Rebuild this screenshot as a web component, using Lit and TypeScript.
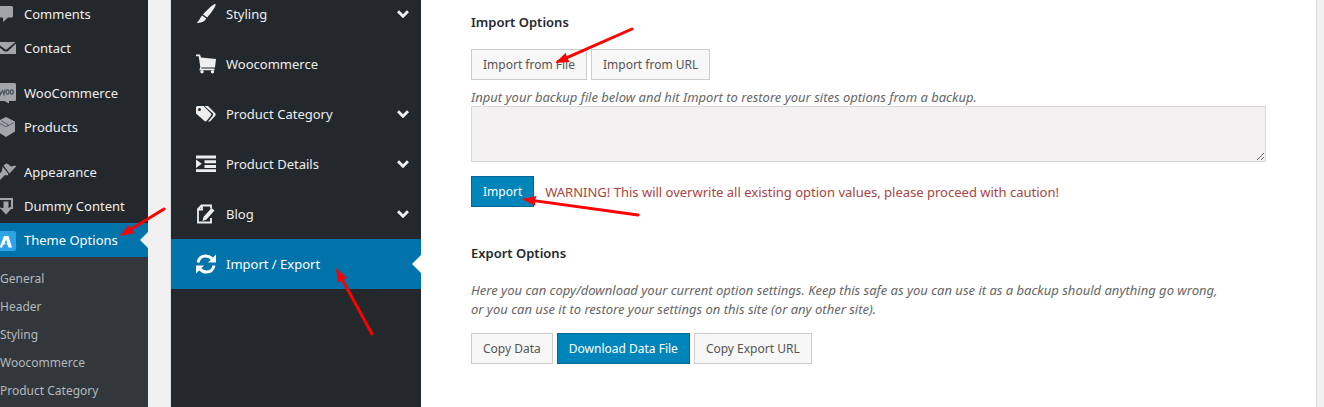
import { LitElement, html, svg, css } from "lit";
import { customElement } from "lit/decorators.js";
import { classMap } from "lit/directives/class-map.js";

const adminIcons: Record<string, unknown> = {
  comments: svg`<path fill="#a0a5aa" d="M5 2h11.500a1.500 1.500 0 0 1 1.500 1.500v8.500a1.500 1.500 0 0 1-1.500 1.500H13l-5 4.500v-4.500H5z"/>`,
  contact: svg`<path fill="#a0a5aa" d="M0 4h20.500l-9 7.500h-1zM0 5.500l9.500 8h3L21 5.500V16H0z"/>`,
  woo: svg`<path fill="#a0a5aa" d="M1 0h18.500a1.500 1.500 0 0 1 1.500 1.500v15a1.500 1.500 0 0 1-1.500 1.500H14v2.500L9.500 18H1z"/><path fill="none" stroke="#4c5358" stroke-width="1.200" d="M4 6.500l1.500 5 2-4 1.500 4 1-5"/><ellipse cx="12.500" cy="9" rx="1.500" ry="2.200" fill="none" stroke="#4c5358" stroke-width="1.200"/><ellipse cx="16.800" cy="9" rx="1.500" ry="2.200" fill="none" stroke="#4c5358" stroke-width="1.200"/>`,
  products: svg`<path fill="#a0a5aa" d="M11 0l9 4.500v10L11 20l-9-5.500v-10z"/><path fill="none" stroke="#4c5358" stroke-width=".8" d="M3 5.500l8 4.300 8-4.300M6 3.800l7 3.700v2"/>`,
  appearance: svg`<path fill="#a0a5aa" d="M8.500 3.500l2.500-2 2 .500 3 2.500L20.500 3.500 21 4.500l-6.500 7zM7.500 4.500l6 7.500-1 1.500-2.500-.5-6 6H1l-.500-1 4-4-1-1 3.500-4z"/>`,
  dummy: svg`<path fill="none" stroke="#a0a5aa" stroke-width="2" d="M5.500 12H3V3h14v9H14.500"/><path fill="#a0a5aa" d="M8.500 5.500h5V12H17l-6 6.500L5 12h3.500z"/>`,
  theme: svg`<rect y="1" width="21" height="20" rx="2" fill="#2ea3e5"/><path fill="#fff" d="M9 6h4.500L17 17.500h-3.500l-.8-2.500c-1-1.500-3.200-1.500-4.500 0L7 17.500H4.500zM11 9.500l-1.500 4h3z"/>`,
};

const optionIcons: Record<string, unknown> = {
  brush: svg`<path d="M19.500.2c1 .8-3.500 8.300-8.300 13.300L7 10.500C12 5 18.200-.8 19.500.200zM6.200 11.500l4 3C8.500 17.800 5 19.300.500 18.800 3 17.500 4 13.500 6.200 11.500z"/>`,
  cart: svg`<path d="M0 .5h4l1 3 15 1.500-1 8.500H5.500l-.3 1H18.500v1.700H3.300l1-3L2.700 2.200H0z"/><circle cx="6" cy="17.700" r="1.700"/><circle cx="16.500" cy="17.700" r="1.700"/>`,
  tags: svg`<path fill-rule="evenodd" d="M0 3.500A1.500 1.500 0 0 1 1.500 2H7.500l7.500 7.500a1.500 1.500 0 0 1 0 2L10.500 17a1.500 1.500 0 0 1-2 0L0 9.500zM3.500 4a1.500 1.500 0 1 0 0 3 1.500 1.500 0 0 0 0-3z"/><path d="M8.500 2H12l7.500 7.500v2L14 17.500h-2l5-6v-2z"/>`,
  indent: svg`<path d="M0 1.500h20v3H0zM8.500 6.300h11.500v3H8.500zM8.500 11h11.500v3H8.500zM0 15.200h20V18H0zM0 5.500L5.800 9.800 0 14z"/>`,
  edit: svg`<path fill="none" stroke="#eee" stroke-width="1.800" d="M15 4.500V1.500H5.500L2 5v13.500h13V14M6 1.500V5.500H2"/><path d="M15.500 4l3 2.500-8 9-4 1.500 1-4z"/>`,
  refresh: svg`<path fill="none" stroke="#fff" stroke-width="3" d="M2 8.500C3 4 6 2 9.500 2c3 0 5 1 6.500 3M18 11.500c-1 4.500-4 6.500-7.500 6.500-3 0-5-1-6.500-3"/><path fill="#fff" d="M20 .5V8.500h-8zM0 19.500v-8h8z"/>`,
};

@customElement("admin-menu")
class AdminMenu extends LitElement {
  static styles = css`
    :host { display: block; background: #23282d; }
    .list { list-style: none; margin: 0; padding: 0; }
    .top { margin-top: -3px; }
    .row { display: flex; align-items: center; height: 34px; gap: 8px; color: #eee; text-decoration: none; font-size: 13px; white-space: nowrap; }
    .spaced { margin-top: 11px; }
    .icon { width: 21px; height: 20px; flex: none; margin-left: -5px; overflow: visible; }
    .current { background: #0073aa; color: #fff; }
    .current::after { content: ""; margin-left: auto; border: 8px solid transparent; border-left: 0; border-right-color: #f1f1f1; }
    .sub { background: #32373c; padding: 7px 0; }
    .subrow { display: flex; align-items: center; height: 28px; color: #b4b9be; text-decoration: none; font-size: 12px; white-space: nowrap; }
  `;
  items = [
    ["comments", "Comments", ""], ["contact", "Contact", ""],
    ["woo", "WooCommerce", "gap"], ["products", "Products", ""],
    ["appearance", "Appearance", "gap"], ["dummy", "Dummy Content", ""],
    ["theme", "Theme Options", "current"],
  ];
  render() {
    return html`<nav aria-label="Admin menu">
      <ul class="list top">
        ${this.items.map(([icon, label, kind]) => html`<li class=${classMap({ spaced: kind === "gap" })}>
          <a href="#" class=${classMap({ row: true, current: kind === "current" })}>
            <svg class="icon" viewBox="0 0 21 20" aria-hidden="true">${adminIcons[icon]}</svg>${label}</a></li>`)}
      </ul>
      <ul class="list sub">
        ${["General", "Header", "Styling", "Woocommerce", "Product Category"].map((t) => html`<li><a class="subrow" href="#">${t}</a></li>`)}
      </ul>
    </nav>`;
  }
}

@customElement("options-menu")
class OptionsMenu extends LitElement {
  static styles = css`
    :host { display: block; background: #23282d; }
    .list { list-style: none; margin: -11px 0 0; padding: 0; }
    .row { display: flex; align-items: center; height: 50px; padding-left: 25px; gap: 10px; color: #eee; text-decoration: none; font-size: 13px; white-space: nowrap; }
    .icon { width: 20px; height: 20px; flex: none; fill: #eee; }
    .chevron { width: 12px; height: 8px; margin: 0 12px 0 auto; fill: none; stroke: #eee; stroke-width: 3; }
    .current { background: #0073aa; color: #fff; }
    .current::after { content: ""; margin-left: auto; border: 9px solid transparent; border-left: 0; border-right-color: #fff; }
  `;
  items: [string, string, boolean][] = [
    ["brush", "Styling", true], ["cart", "Woocommerce", false], ["tags", "Product Category", true],
    ["indent", "Product Details", true], ["edit", "Blog", true], ["refresh", "Import / Export", false],
  ];
  render() {
    return html`<nav aria-label="Theme options"><ul class="list">
      ${this.items.map(([icon, label, open]) => html`<li>
        <a href="#" class=${classMap({ row: true, current: icon === "refresh" })}>
          <svg class="icon" viewBox="0 0 20 20" aria-hidden="true">${optionIcons[icon]}</svg>${label}
          ${open ? html`<svg class="chevron" viewBox="0 0 12 8" aria-hidden="true"><path d="M1 1.200l5 5 5-5"/></svg>` : ""}</a></li>`)}
    </ul></nav>`;
  }
}

@customElement("import-export")
class ImportExport extends LitElement {
  static styles = css`
    :host { display: block; background: #fff; border-right: 1px solid #ddd; padding: 12px 50px; color: #23282d; }
    .title { margin: 0; font-size: 13px; font-weight: 600; line-height: 20px; }
    .bar { display: flex; align-items: center; gap: 4px; }
    .tabs { margin-top: 17px; }
    .btn { box-sizing: border-box; height: 31px; padding: 0 11px; border: 1px solid #ccc; background: #f7f7f7; color: #555; font: 12px/20px "Noto Sans", "Open Sans", sans-serif; white-space: nowrap; }
    .primary { background: #0085ba; border-color: #006799; color: #fff; }
    .hint { display: block; font-size: 13px; font-style: italic; line-height: 19px; color: #666; margin: 8px 0 0; }
    .box { display: block; box-sizing: border-box; width: 100%; height: 56px; margin: -1px 0 0; border: 1px solid #d8d8d8; background: #f3f1f2; resize: vertical; }
    .action { margin-top: 14px; gap: 11px; }
    .warning { font-size: 13px; color: #a94442; }
    .export { margin-top: 36px; }
    .desc { margin-top: 18px; padding-right: 40px; }
    .downloads { margin-top: 14px; }
  `;
  render() {
    return html`
      <section>
        <h3 class="title">Import Options</h3>
        <div class="bar tabs"><button class="btn">Import from File</button><button class="btn">Import from URL</button></div>
        <label class="hint" for="backup">Input your backup file below and hit Import to restore your sites options from a backup.</label>
        <textarea class="box" id="backup"></textarea>
        <div class="bar action"><button class="btn primary">Import</button><span class="warning">WARNING! This will overwrite all existing option values, please proceed with caution!</span></div>
      </section>
      <section class="export">
        <h3 class="title">Export Options</h3>
        <p class="hint desc">Here you can copy/download your current option settings. Keep this safe as you can use it as a backup should anything go wrong, or you can use it to restore your settings on this site (or any other site).</p>
        <div class="bar downloads"><button class="btn">Copy Data</button><button class="btn primary">Download Data File</button><button class="btn">Copy Export URL</button></div>
      </section>`;
  }
}

@customElement("app-root")
class AppRoot extends LitElement {
  static styles = css`
    :host { display: block; position: relative; height: 100vh; overflow: hidden; background: #f1f1f1; font-family: "Noto Sans", "Open Sans", sans-serif; }
    .page { display: grid; grid-template-columns: 148px minmax(0, 1fr); column-gap: 22px; height: 100%; }
    .panel { display: grid; grid-template-columns: 250px minmax(0, 1fr); margin-right: 7px; border-left: 1px solid #ddd; }
    .arrows { position: absolute; top: 0; left: 0; width: 1324px; height: 407px; pointer-events: none; }
  `;
  arrow(x1: number, y1: number, x2: number, y2: number) {
    const length = Math.hypot(x2 - x1, y2 - y1);
    const angle = (Math.atan2(y2 - y1, x2 - x1) * 180) / Math.PI;
    return svg`<g transform="translate(${x2} ${y2}) rotate(${angle})">
      <path d="M${-length} 0H-10" stroke="#f00" stroke-width="3" stroke-linecap="round"/>
      <path d="M0 0L-14 -5L-13 0L-14 5Z" fill="#f00"/></g>`;
  }
  render() {
    return html`
      <div class="page">
        <admin-menu></admin-menu>
        <main class="panel"><options-menu></options-menu><import-export></import-export></main>
      </div>
      <svg class="arrows" viewBox="0 0 1324 407" aria-hidden="true">
        ${this.arrow(632, 29, 555, 63)}
        ${this.arrow(638, 215, 522, 199)}
        ${this.arrow(164, 209, 120, 236)}
        ${this.arrow(372, 334, 336, 268)}
      </svg>`;
  }
}
